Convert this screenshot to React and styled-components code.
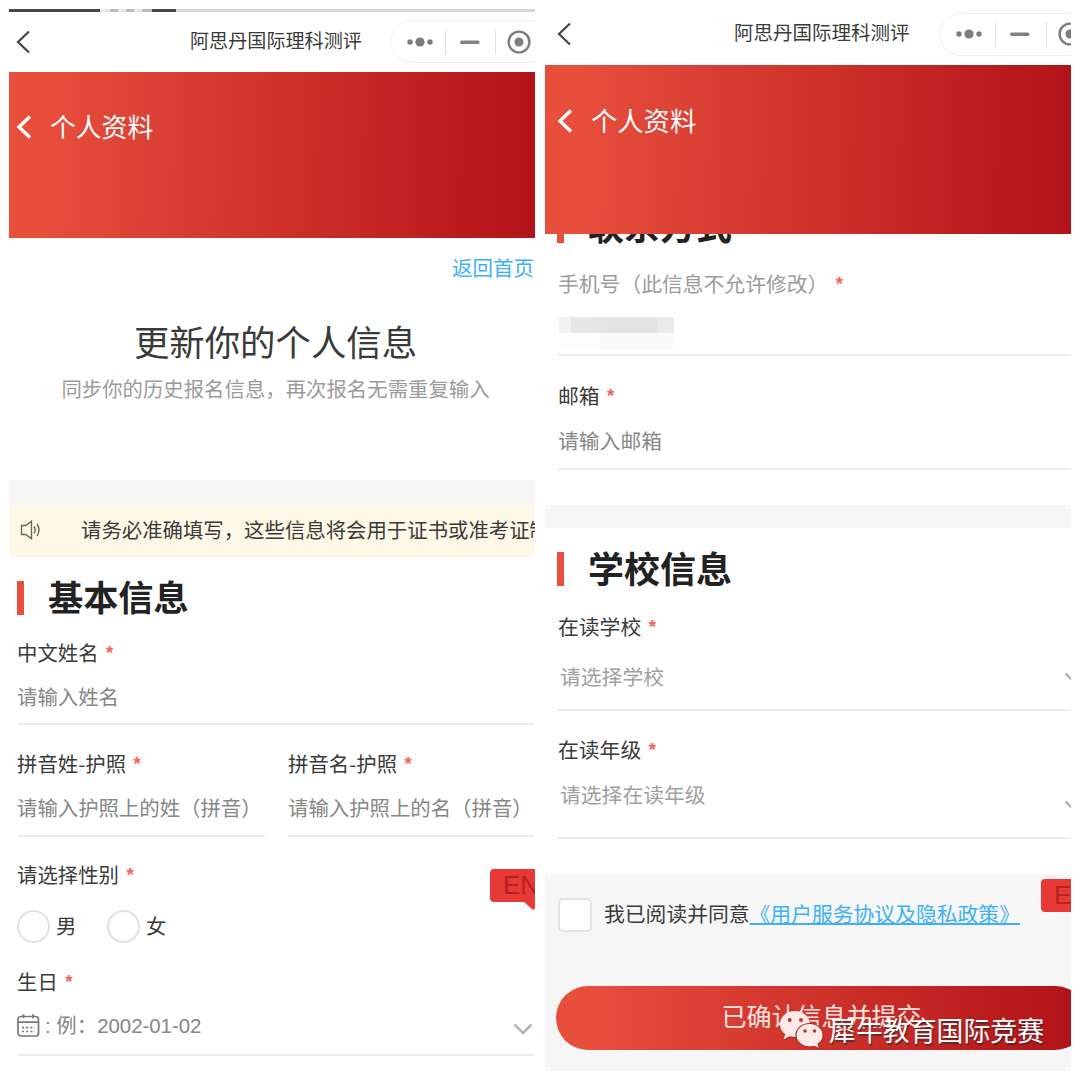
import React from 'react'
import styled, { createGlobalStyle } from 'styled-components'

const GlobalStyle = createGlobalStyle`
  * {
    box-sizing: border-box;
  }

  body {
    margin: 0;
    background: #fff;
    font-family: 'Noto Sans CJK SC', 'Liberation Sans', sans-serif;
    color: #3a3a3a;
  }
`

const Page = styled.main`
  position: relative;
  display: grid;
  grid-template-columns: 526px 526px;
  gap: 10px;
  width: 1080px;
  height: 1080px;
  padding: 9px;
  overflow: hidden;
`

const Phone = styled.section`
  position: relative;
  height: 1062px;
  overflow: hidden;
  font-size: ${props => props.$size}px;
  white-space: nowrap;
`

const Strip = styled.div`
  display: flex;
  align-items: center;
  height: 3px;
  background: #d6d6d6;
`

const StripPart = styled.span`
  width: ${props => props.$width}px;
  height: 3px;
  background: ${props => props.$color};
`

const TitleBar = styled.header`
  display: flex;
  align-items: center;
  height: ${props => props.$height}px;
  padding-left: ${props => props.$left}px;
  padding-bottom: ${props => props.$bottom}px;

  & > svg {
    flex: none;
  }
`

const AppTitle = styled.h1`
  flex: none;
  width: ${props => props.$width}px;
  margin: 0 0 4px ${props => props.$left}px;
  font-size: ${props => props.$size}px;
  font-weight: 400;
  line-height: 28px;
`

const Capsule = styled.div`
  display: flex;
  flex: none;
  align-items: center;
  gap: ${props => props.$gap || 0}px;
  width: 160px;
  height: 43px;
  padding-left: 16px;
  border: 1px solid #f0f0f0;
  border-radius: 22px;
`

const CapsuleLine = styled.span`
  width: 1px;
  height: 24px;
  margin: 0 14px 0 ${props => props.$left}px;
  background: #e2e2e2;
`

const TargetIcon = styled.svg`
  flex: none;
  width: 24px;
  height: 24px;
  margin-left: -3px;
`

const Banner = styled.div`
  position: relative;
  z-index: 1;
  display: flex;
  align-items: flex-start;
  height: ${props => props.$height}px;
  padding: ${props => props.$top}px 0 0 ${props => props.$left}px;
  background: linear-gradient(91deg, #e74e3c 7%, #b21318 100%);
  color: #fff;
  font-size: ${props => props.$size}px;
  line-height: 34px;

  svg {
    margin: 6px 18px 0 0;
  }
`

const HomeLink = styled.a`
  display: block;
  height: 58px;
  padding-right: 1px;
  color: #3fb0f5;
  font-size: 20.5px;
  line-height: 58px;
  text-align: right;
`

const Hero = styled.div`
  height: 184px;
  padding-top: 23px;
  text-align: center;
`

const HeroTitle = styled.h2`
  margin: 0 0 11px 7px;
  font-size: 35.4px;
  font-weight: 400;
  line-height: 44px;
`

const HeroText = styled.p`
  margin: 0 0 0 7px;
  color: #9b9b9b;
  line-height: 28px;
`

const Band = styled.div`
  height: 23px;
  margin-top: ${props => props.$top || 0}px;
  background: #f6f6f6;
`

const Notice = styled.div`
  display: flex;
  align-items: center;
  height: 54px;
  padding: 0 0 2px 11px;
  background: #fef9e6;

  svg {
    flex: none;
    margin: 2px 38px 0 0;
  }
`

const Heading = styled.h3`
  display: flex;
  align-items: center;
  height: 34px;
  margin: ${props => props.$top}px 0 0 ${props => props.$left}px;
  padding: 0 0 4px 24px;
  border-left: 7px solid #e84f3e;
  color: #222;
  font-size: ${props => props.$size}px;
  font-weight: 700;
  line-height: 34px;
`

const Form = styled.div`
  padding-left: ${props => props.$left}px;
`

const FieldBox = styled.div`
  padding: ${props => props.$top}px 0 ${props => props.$bottom}px;
  border-bottom: ${props => (props.$plain ? 'none' : '2px solid #ededed')};
`

const Label = styled.div`
  display: flex;
  height: 28px;
  color: ${props => (props.$muted ? '#9b9b9b' : '#3a3a3a')};
  line-height: 28px;
`

const Star = styled.span`
  margin-left: 7.5px;
  color: #f8605c;
  font-family: 'Liberation Sans', sans-serif;
  font-size: 18.5px;
  font-weight: 700;
  line-height: 29px;
`

const Value = styled.div`
  display: flex;
  align-items: center;
  height: 28px;
  margin-top: ${props => props.$top}px;
  padding-left: ${props => props.$indent || 0}px;
  color: ${props => props.$color || '#868686'};
  line-height: 28px;
`

const Arrow = styled.svg`
  flex: none;
  width: 20px;
  height: 12px;
  margin: ${props => props.$top}px ${props => props.$right}px 0 auto;
`

const TwoFields = styled.div`
  display: grid;
  grid-template-columns: 248px 248px;
  gap: 23px;
`

const Radios = styled.div`
  display: flex;
  align-items: center;
  height: 33px;
  margin-top: 22px;
`

const Radio = styled.span`
  width: 33px;
  height: 33px;
  margin-right: 6px;
  border: 2px solid #e1e1e1;
  border-radius: 50%;
`

const RadioText = styled.span`
  width: 51px;
  margin-bottom: 4px;
`

const DateText = styled.span`
  margin: 1px 0 0 ${props => props.$left}px;
  font-family: 'Liberation Sans', 'Noto Sans CJK SC', sans-serif;
`

const MaskedNumber = styled.div`
  width: 115px;
  height: 33px;
  margin: 20px 0 0 1px;
  background:
    linear-gradient(90deg, #f2f2f2 0 12px, #e7e7e7 12px 32px, #e5e5e5 32px 50px, #e3e3e3 50px 98px, #e9e9e9 98px) 0 0 / 115px 16px no-repeat,
    linear-gradient(90deg, #fdfdfd 0 40px, #fafafa 40px) 0 16px / 115px 17px no-repeat;
`

const Footer = styled.footer`
  height: 197px;
  margin-top: 35px;
  padding: 24px 0 0 11px;
  background: #f6f6f6;
`

const Agreement = styled.div`
  display: flex;
  align-items: center;
  height: 34px;
  line-height: 30px;
`

const Checkbox = styled.span`
  width: 34px;
  height: 34px;
  margin: 0 12px 0 2px;
  border: 2px solid #e2e2e2;
  border-radius: 5px;
  background: #fff;
`

const AgreementText = styled.span`
  margin-top: -5px;
`

const PolicyLink = styled.a`
  color: #3fb0f5;
  text-decoration: underline;
  text-decoration-thickness: 2px;
  text-underline-offset: 1px;
`

const Submit = styled.button`
  display: block;
  width: 531px;
  height: 64px;
  margin-top: 54px;
  padding: 0 0 6px;
  border: 0;
  border-radius: 32px;
  background: linear-gradient(91deg, #e74e3c 7%, #b21318 97%);
  color: #fbe4e2;
  font-family: inherit;
  font-size: 25px;
`

const LangBadge = styled.div`
  position: absolute;
  top: ${props => props.$top}px;
  right: ${props => props.$right}px;
  width: 70px;
  height: 33px;
  padding-left: 13px;
  border-radius: 4px;
  background: #e73936;
  color: #b4211f;
  font-family: 'Liberation Sans', sans-serif;
  font-size: 26px;
  line-height: 33px;

  &::after {
    position: absolute;
    top: 32px;
    left: 33px;
    border-top: 9px solid #e73936;
    border-left: 10px solid transparent;
    border-right: 10px solid transparent;
    content: ${props => (props.$tail ? "''" : 'none')};
  }
`

const Watermark = styled.div`
  position: absolute;
  top: 1010px;
  left: 779px;
  display: flex;
  align-items: center;
  color: #fff;
  font-size: 26.9px;
  line-height: 40px;
  text-shadow: 1px 2px 1px rgba(60, 40, 40, 0.75);
  white-space: nowrap;

  svg {
    margin: -2px 5px 0 0;
  }
`

function BackIcon({ color, width }) {
  return (
    <svg width="16" height="24" viewBox="0 0 16 24" fill="none" stroke={color} strokeWidth={width}>
      <path d="M14 1.5 3 12l11 10.5" />
    </svg>
  )
}

function ArrowDown(props) {
  return (
    <Arrow viewBox="0 0 20 12" fill="none" stroke="#b5b5b5" strokeWidth="2.6" {...props}>
      <path d="m1.5 1.5 8.5 8.5 8.5-8.5" />
    </Arrow>
  )
}

function CapsuleMenu({ gap }) {
  return (
    <Capsule $gap={gap}>
      <svg width="26" height="12" fill="#7d7d7d">
        <circle cx="3" cy="6" r="2.7" />
        <circle cx="13" cy="6" r="4.6" />
        <circle cx="23" cy="6" r="2.7" />
      </svg>
      <CapsuleLine $left={12} />
      <svg width="20" height="4">
        <rect y="0.5" width="19.5" height="3.4" rx="1.5" fill="#828282" />
      </svg>
      <CapsuleLine $left={15} />
      <TargetIcon viewBox="0 0 24 24">
        <circle cx="12" cy="12" r="10.4" fill="none" stroke="#7d7d7d" strokeWidth="2.4" />
        <circle cx="12" cy="12" r="4.5" fill="#7d7d7d" />
      </TargetIcon>
    </Capsule>
  )
}

function SpeakerIcon() {
  return (
    <svg width="23" height="20" viewBox="0 0 23 20" fill="none" stroke="#6b6858" strokeWidth="1.4">
      <path d="M1.5 5.500h4.300l5.700-4.300v17.600l-5.700-4.300H1.500z" />
      <path d="M14 6.500q2.500 3.500 0 7M17 4q4 6 0 12" />
    </svg>
  )
}

function CalendarIcon() {
  return (
    <svg width="23" height="24" viewBox="0 0 23 24" fill="none" stroke="#777" strokeWidth="1.7">
      <rect x="1" y="3.500" width="20.500" height="19.500" rx="3" />
      <path d="M1 9.200h20.500M6.500 1.300v4M16 1.300v4" />
      <path d="M5 14.700h13M5 18.500h13" strokeDasharray="2 2.200" />
    </svg>
  )
}

function WechatIcon() {
  return (
    <svg width="45" height="40" viewBox="0 0 45 40">
      <g fill="#a32320" opacity="0.75" transform="translate(1 1.2)">
        <path d="M16 2C7.500 2 1 7.800 1 15.200c0 4.200 2 7.700 5.300 10.100L4.500 30.500l6.300-3.300c1.700.5 3.400.8 5.200.8 8.500 0 15-5.700 15-12.800S24.500 2 16 2z" />
      </g>
      <path fill="#fdeae9" d="M16 2C7.500 2 1 7.800 1 15.200c0 4.200 2 7.700 5.300 10.100L4.500 30.500l6.300-3.300c1.700.5 3.400.8 5.200.8 8.500 0 15-5.700 15-12.800S24.500 2 16 2z" />
      <path
        fill="#fdeae9"
        stroke="#a8302c"
        strokeWidth="1.2"
        d="M30.500 14.500c-7.500 0-13.500 5.200-13.500 11.700S23 38 30.500 38c1.600 0 3.200-.3 4.600-.7l5.400 2.400-1.300-4.600c3-2.200 4.900-5.300 4.900-8.900 0-6.500-6.100-11.700-13.600-11.700z"
      />
      <g fill="#c0352f">
        <circle cx="10.700" cy="11" r="2" />
        <circle cx="22" cy="11" r="2" />
        <circle cx="26" cy="22" r="1.800" />
        <circle cx="35.500" cy="22" r="1.800" />
      </g>
    </svg>
  )
}

function Field({ label, muted, top, bottom, plain, children }) {
  return (
    <FieldBox $top={top} $bottom={bottom} $plain={plain}>
      <Label $muted={muted}>
        {label}
        <Star>*</Star>
      </Label>
      {children}
    </FieldBox>
  )
}

function BasicInfo() {
  return (
    <Phone $size={20.4}>
      <Strip>
        <StripPart $width={91} $color="#45464a" />
        <StripPart $width={10} $color="#e8e8e8" />
        <StripPart $width={8} $color="#bbb" />
        <StripPart $width={8} $color="#e8e8e8" />
        <StripPart $width={8} $color="#bbb" />
        <StripPart $width={8} $color="#e8e8e8" />
        <StripPart $width={10} $color="#bbb" />
        <StripPart $width={24} $color="#45464a" />
      </Strip>
      <TitleBar $height={60} $left={6} $bottom={1}>
        <BackIcon color="#444" width={2.2} />
        <AppTitle $size={19.1} $left={159} $width={200}>阿思丹国际理科测评</AppTitle>
        <CapsuleMenu />
      </TitleBar>
      <Banner $height={166} $top={37} $left={7} $size={25.8}>
        <BackIcon color="#fff" width={3.4} />
        个人资料
      </Banner>
      <HomeLink>返回首页</HomeLink>
      <Hero>
        <HeroTitle>更新你的个人信息</HeroTitle>
        <HeroText>同步你的历史报名信息，再次报名无需重复输入</HeroText>
      </Hero>
      <Band />
      <Notice>
        <SpeakerIcon />
        请务必准确填写，这些信息将会用于证书或准考证制作
      </Notice>
      <Heading $top={24} $left={8} $size={35.2}>基本信息</Heading>
      <Form $left={8}>
        <Field label="中文姓名" top={23} bottom={13}>
          <Value $top={16}>请输入姓名</Value>
        </Field>
        <TwoFields>
          <Field label="拼音姓-护照" top={24} bottom={14}>
            <Value $top={16}>请输入护照上的姓（拼音）</Value>
          </Field>
          <Field label="拼音名-护照" top={24} bottom={14}>
            <Value $top={16}>请输入护照上的名（拼音）</Value>
          </Field>
        </TwoFields>
        <Field label="请选择性别" top={23} bottom={0} plain>
          <Radios>
            <Radio />
            <RadioText>男</RadioText>
            <Radio />
            <RadioText>女</RadioText>
          </Radios>
        </Field>
        <Field label="生日" top={24} bottom={15}>
          <Value $top={16}>
            <CalendarIcon />
            <DateText $left={5}>: 例：</DateText>
            <DateText $left={0}>2002-01-02</DateText>
            <ArrowDown $top={8} $right={2} />
          </Value>
        </Field>
      </Form>
      <LangBadge $top={860} $right={-25} $tail>EN</LangBadge>
    </Phone>
  )
}

function SchoolInfo() {
  return (
    <Phone $size={20.8}>
      <TitleBar $height={56} $left={11} $bottom={6}>
        <BackIcon color="#444" width={2.2} />
        <AppTitle $size={19.5} $left={162} $width={205}>阿思丹国际理科测评</AppTitle>
        <CapsuleMenu gap={0.5} />
      </TitleBar>
      <Banner $height={169} $top={38} $left={12} $size={26.3}>
        <BackIcon color="#fff" width={3.4} />
        个人资料
      </Banner>
      <Heading $top={-25} $left={12} $size={36}>联系方式</Heading>
      <Form $left={13}>
        <Field label="手机号（此信息不允许修改）" muted top={26} bottom={4}>
          <MaskedNumber />
        </Field>
        <Field label="邮箱" top={25} bottom={14}>
          <Value $top={17}>请输入邮箱</Value>
        </Field>
      </Form>
      <Band $top={35} />
      <Heading $top={24} $left={12} $size={36}>学校信息</Heading>
      <Form $left={13}>
        <Field label="在读学校" top={26} bottom={19}>
          <Value $top={22} $indent={2} $color="#a0a0a0">
            请选择学校
            <ArrowDown $top={4} $right={-13} />
          </Value>
        </Field>
        <Field label="在读年级" top={24} bottom={29}>
          <Value $top={17} $indent={2} $color="#a0a0a0">
            请选择在读年级
            <ArrowDown $top={24} $right={-13} />
          </Value>
        </Field>
      </Form>
      <Footer>
        <Agreement>
          <Checkbox />
          <AgreementText>
            我已阅读并同意<PolicyLink>《用户服务协议及隐私政策》</PolicyLink>
          </AgreementText>
        </Agreement>
        <Submit>已确认信息并提交</Submit>
      </Footer>
      <LangBadge $top={870} $right={-40}>EN</LangBadge>
    </Phone>
  )
}

export default function App() {
  return (
    <>
      <GlobalStyle />
      <Page>
        <BasicInfo />
        <SchoolInfo />
        <Watermark>
          <WechatIcon />
          犀牛教育国际竞赛
        </Watermark>
      </Page>
    </>
  )
}
